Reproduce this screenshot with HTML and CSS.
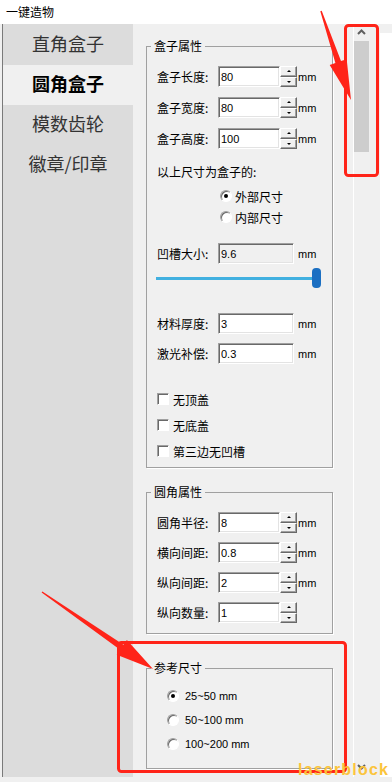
FILE: index.html
```html
<!DOCTYPE html>
<html lang="zh-CN">
<head>
  <meta charset="UTF-8" />
  <meta name="viewport" content="width=device-width, initial-scale=1" />
  <title>一键造物</title>
  <link rel="stylesheet" href="styles.css">
</head>
<body>

  <div class="title-bar">一键造物</div>

  <div class="main">
    <nav class="tabs">
      <a class="tab">直角盒子</a>
      <a class="tab active">圆角盒子</a>
      <a class="tab">模数齿轮</a>
      <a class="tab">徽章/印章</a>
    </nav>

    <div class="panel">
      <!-- 盒子属性 -->
      <fieldset class="group">
        <legend>盒子属性</legend>
        <div class="group-body box-props">
          <div class="field">
            <label>盒子长度:</label>
            <input class="num" value="80">
            <div class="spin"><span class="up"></span><span class="down"></span></div>
            <span class="unit">mm</span>
          </div>
          <div class="field">
            <label>盒子宽度:</label>
            <input class="num" value="80">
            <div class="spin"><span class="up"></span><span class="down"></span></div>
            <span class="unit">mm</span>
          </div>
          <div class="field">
            <label>盒子高度:</label>
            <input class="num" value="100">
            <div class="spin"><span class="up"></span><span class="down"></span></div>
            <span class="unit">mm</span>
          </div>

          <div class="caption">以上尺寸为盒子的:</div>
          <div class="options">
            <div class="option"><span class="radio on"></span>外部尺寸</div>
            <div class="option"><span class="radio"></span>内部尺寸</div>
          </div>

          <div class="field groove">
            <label>凹槽大小:</label>
            <input class="num wide readonly" value="9.6" readonly>
            <span class="unit">mm</span>
          </div>
          <div class="slider">
            <div class="track"></div>
            <div class="thumb"></div>
          </div>

          <div class="field material">
            <label>材料厚度:</label>
            <input class="num wide" value="3">
            <span class="unit">mm</span>
          </div>
          <div class="field laser">
            <label>激光补偿:</label>
            <input class="num wide" value="0.3">
            <span class="unit">mm</span>
          </div>

          <div class="checks">
            <div class="option"><span class="check"></span>无顶盖</div>
            <div class="option"><span class="check"></span>无底盖</div>
            <div class="option"><span class="check"></span>第三边无凹槽</div>
          </div>
        </div>
      </fieldset>

      <!-- 圆角属性 -->
      <fieldset class="group round-props">
        <legend>圆角属性</legend>
        <div class="group-body">
          <div class="field">
            <label>圆角半径:</label>
            <input class="num" value="8">
            <div class="spin"><span class="up"></span><span class="down"></span></div>
            <span class="unit">mm</span>
          </div>
          <div class="field">
            <label>横向间距:</label>
            <input class="num" value="0.8">
            <div class="spin"><span class="up"></span><span class="down"></span></div>
            <span class="unit">mm</span>
          </div>
          <div class="field">
            <label>纵向间距:</label>
            <input class="num" value="2">
            <div class="spin"><span class="up"></span><span class="down"></span></div>
            <span class="unit">mm</span>
          </div>
          <div class="field">
            <label>纵向数量:</label>
            <input class="num" value="1">
            <div class="spin"><span class="up"></span><span class="down"></span></div>
          </div>
        </div>
      </fieldset>

      <!-- 参考尺寸 -->
      <fieldset class="group ref-size">
        <legend>参考尺寸</legend>
        <div class="group-body">
          <div class="options">
            <div class="option"><span class="radio on"></span>25~50 mm</div>
            <div class="option"><span class="radio"></span>50~100 mm</div>
            <div class="option"><span class="radio"></span>100~200 mm</div>
          </div>
        </div>
      </fieldset>
    </div>

    <div class="scrollbar">
      <svg class="arrow" width="15" height="17" viewBox="0 0 15 17">
        <polyline points="4,10 7.5,6.5 11,10" fill="none" stroke="#606060" stroke-width="2"/>
      </svg>
      <div class="thumb-bar"></div>
      <svg class="arrow down" width="15" height="17" viewBox="0 0 15 17">
        <polyline points="4,5 7.5,8.5 11,5" fill="none" stroke="#606060" stroke-width="2"/>
      </svg>
    </div>
    <div class="edge"></div>
  </div>

  <div class="status"></div>

  <!-- red annotations drawn over the window -->
  <svg class="marks" width="392" height="782" viewBox="0 0 392 782">
    <g fill="none" stroke="#ff2419" stroke-width="3">
      <rect x="345.5" y="25.5" width="32" height="150" rx="3"/>
      <rect x="118.5" y="642.5" width="227" height="129" rx="3"/>
    </g>
    <g fill="#ff2419">
      <polygon points="320.3,11.2 321.7,10.8 341,61.1 346.7,59.2 351,100 329.7,65 335.4,63.1"/>
      <polygon points="41.6,592.6 42.4,591.4 123.5,644.8 126.9,639.9 153,669 116.7,654.7 120.1,649.8"/>
    </g>
  </svg>

  <div class="watermark">laserblock</div>

</body>
</html>
```

FILE: styles.css
```css
/* WINDOW */
* {
  box-sizing: border-box;
}
body {
  margin: 0;
  width: 392px;
  height: 782px;
  overflow: hidden;
  position: relative;
  background: #f0f0f0;
  font-family: "Liberation Sans", "Noto Sans CJK SC", sans-serif;
  font-size: 12px;
  color: #000;
}
.title-bar {
  height: 24px;
  line-height: 24px;
  padding-left: 6px;
  background: #fff;
  font-family: "Noto Sans CJK SC", sans-serif;
}
.main {
  display: flex;
  height: 753px;
}
.status {
  height: 5px;
}

/* LEFT TABS */
.tabs {
  width: 131px;
  margin-left: 2px;
  padding-top: 1px;
  background: #dcdcdc;
  border-left: 1px solid #7a7a7a;
}
.tab {
  display: block;
  height: 40px;
  line-height: 37px;
  text-align: center;
  font-family: "Noto Sans CJK SC", sans-serif;
  font-size: 18px;
  color: #333;
}
.tab.active {
  background: #f0f0f0;
  color: #000;
  font-weight: bold;
}

/* PANEL + GROUP BOXES */
.panel {
  width: 220px;
  padding: 14px 0 0 13px;
}
.group {
  width: 187px;
  min-width: 0;
  margin: 0;
  padding: 0;
  border: 1px solid #a0a0a0;
  box-shadow: 1px 1px 0 #fff;
}
.group legend {
  margin-left: 4px;
  padding: 0 3px;
  line-height: 16px;
  font-family: "Noto Sans CJK SC", sans-serif;
}
.group-body {
  padding: 12px 0 8px 10px;
}
.round-props {
  margin-top: 16px;
}
.round-props .group-body {
  padding-bottom: 10px;
}
.ref-size {
  margin-top: 26px;
}
.ref-size .group-body {
  padding-bottom: 16px;
}

/* FIELDS */
.field {
  display: flex;
  align-items: center;
  height: 21px;
}
.field + .field {
  margin-top: 10px;
}
.round-props .field + .field {
  margin-top: 9px;
}
.field label {
  width: 61px;
  font-family: "Noto Sans CJK SC", sans-serif;
}
.num {
  width: 62px;
  height: 21px;
  margin: 0;
  padding: 0 0 0 2px;
  border: 1px solid;
  border-color: #a0a0a0 #fff #fff #a0a0a0;
  box-shadow: inset 1px 1px 0 #696969, inset -1px -1px 0 #e3e3e3;
  background: #fff;
  font-family: "Liberation Sans", sans-serif;
  font-size: 11px;
  color: #000;
  outline: none;
}
.num.wide {
  width: 76px;
}
.num.readonly {
  background: #f0f0f0;
}
.spin {
  display: flex;
  flex-direction: column;
  width: 17px;
  height: 21px;
}
.spin span {
  flex: 1;
  display: flex;
  align-items: center;
  justify-content: center;
  background: #f0f0f0;
  border: 1px solid;
  border-color: #fff #696969 #696969 #fff;
  box-shadow: inset -1px -1px 0 #a0a0a0;
}
.spin .up::after,
.spin .down::after {
  content: "";
  border-left: 2px solid transparent;
  border-right: 2px solid transparent;
}
.spin .up::after {
  border-bottom: 2px solid #000;
}
.spin .down::after {
  border-top: 2px solid #000;
}
.unit {
  margin-left: 1px;
  font-size: 11px;
}
.wide + .unit {
  margin-left: 4px;
}

.caption {
  margin-top: 15px;
  line-height: 16px;
  font-family: "Noto Sans CJK SC", sans-serif;
}
.options {
  display: flex;
  flex-direction: column;
  gap: 5px;
  margin: 8px 0 0 63px;
}
.option {
  display: flex;
  align-items: center;
  gap: 3px;
  height: 16px;
  font-family: "Noto Sans CJK SC", sans-serif;
}
.ref-size .options {
  gap: 8px;
  margin: 0 0 0 10px;
}
.ref-size .option {
  gap: 6px;
  font-family: "Liberation Sans", sans-serif;
  font-size: 11px;
}
.radio {
  display: flex;
  align-items: center;
  justify-content: center;
  width: 12px;
  height: 12px;
  border-radius: 50%;
  border: 1px solid;
  border-color: #a0a0a0 #fff #fff #a0a0a0;
  box-shadow: inset 1px 1px 0 #696969;
  background: #fff;
}
.radio.on::after {
  content: "";
  width: 4px;
  height: 4px;
  border-radius: 50%;
  background: #000;
}

.field.groove {
  margin-top: 18px;
}
.slider {
  display: flex;
  align-items: center;
  width: 165px;
  height: 20px;
  margin: 4px 0 0 -1px;
}
.track {
  flex: 1;
  height: 3px;
  background: #41b0e0;
}
.thumb {
  width: 9px;
  height: 20px;
  border-radius: 4px;
  background: #1b6fc2;
}
.field.material {
  margin-top: 25px;
}
.field.laser {
  margin-top: 9px;
}

.checks {
  display: flex;
  flex-direction: column;
  gap: 10px;
  margin-top: 27px;
}
.checks .option {
  gap: 4px;
}
.check {
  width: 12px;
  height: 12px;
  border: 1px solid;
  border-color: #a0a0a0 #fff #fff #a0a0a0;
  box-shadow: inset 1px 1px 0 #696969;
  background: #fff;
}

/* SCROLLBAR */
.scrollbar {
  display: flex;
  flex-direction: column;
  width: 27px;
  border-left: 1px solid #fff;
}
.arrow {
  display: block;
}
.arrow.down {
  margin-top: auto;
}
.thumb-bar {
  width: 15px;
  height: 111px;
  background: #cdcdcd;
}
.edge {
  flex: 1;
  margin-top: 9px;
  background: #fff;
}

/* OVERLAYS */
.marks {
  position: absolute;
  top: 0;
  left: 0;
  pointer-events: none;
}
.watermark {
  position: absolute;
  left: 298px;
  top: 762px;
  line-height: 16px;
  font-family: "Liberation Sans", sans-serif;
  font-size: 16px;
  font-weight: bold;
  letter-spacing: 1.2px;
  color: #fbc43c;
}
```
